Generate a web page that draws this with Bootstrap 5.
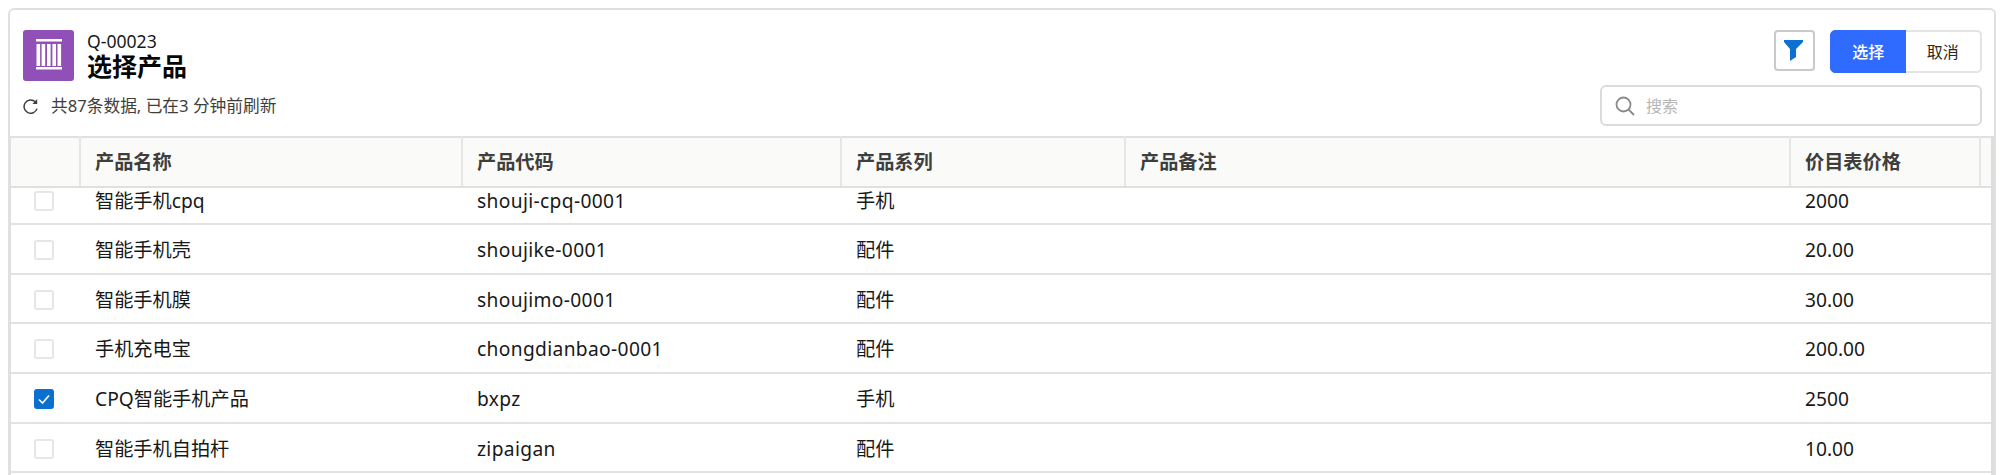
<!DOCTYPE html>
<html lang="en">
  <head>
    <meta charset="utf-8" />
    <meta name="viewport" content="width=device-width, initial-scale=1" />
    <title>选择产品</title>
    <link href="https://cdn.jsdelivr.net/npm/bootstrap@5.3.3/dist/css/bootstrap.min.css" rel="stylesheet" />
    <style>
      html, body { height: 475px; overflow: hidden; }
      body { background: #fff; font-family: "Noto Sans", "Noto Sans CJK SC", sans-serif; color: #181818; }
      .picker-page { padding: 8px 4px 0 8px; }
      .picker-card { border: 2px solid #e0e0e0; border-bottom: 0; border-radius: 6px 6px 0 0; height: 467px; overflow: hidden; background: #fff; }
      .picker-head { padding: 20px 12px 10px 13px; height: 126px; }
      .picker-icon { width: 51px; height: 51px; background: #9050b8; border-radius: 3px; flex: none; }
      .picker-names { padding-top: 1px; padding-left: 1px; }
      .picker-sub { font-size: 17.6px; line-height: 20px; color: #181818; }
      .picker-title { font-size: 25px; line-height: 30px; font-weight: 700; color: #080707; }
      .picker-info { font-size: 16.7px; color: #3e3e3c; line-height: 22px; padding-top: 1px; }
      .filter-btn { width: 41px; height: 41px; border: 2px solid #c9c9c9; border-radius: 4px; background: #fff; padding: 0 2px 0 0; }
      .pick-group { width: 152px; height: 43px; }
      .pick-group .btn { font-size: 16px; line-height: 22px; padding: 0; border-radius: 5px; }
      .btn-choose { background: #2f6bff; border: 1px solid #2f6bff; color: #fff; font-weight: 500; }
      .btn-choose:hover { background: #2f6bff; color: #fff; }
      .btn-cancel { background: #fff; border: 2px solid #e4e4e4; border-left: 0; color: #2b2826; }
      .action-row { gap: 15px; }
      .search-box { width: 382px; height: 41px; border: 2px solid #dddbda; border-radius: 6px; padding-left: 13px; gap: 11px; }
      .search-box input { border: 0; outline: 0; font-size: 16px; padding: 0; width: 320px; color: #181818; background: transparent; }
      .search-box input::placeholder { color: #b5b5b5; }
      .list-wrap { border-left: 1px solid #e0e0e0; border-right: 3px solid #dedede; height: 341px; overflow: hidden; }
      .list-table { table-layout: fixed; width: 1982px; margin: 0; border-collapse: collapse; font-size: 19.2px; }
      .list-table th, .list-table td { padding: 0 14px; vertical-align: middle; white-space: nowrap; line-height: 24px; box-shadow: none; }
      .list-table th { height: 50px; background: #fafaf9; color: #3e3e3c; font-weight: 700; border-top: 2px solid #e0e0e0; border-bottom: 2px solid #e0e0e0; border-right: 2px solid #e6e6e4; }
      .list-table th:last-child { border-right: 0; }
      .list-table td { height: 50px; color: #181818; border-bottom: 2px solid #e2e2e2; padding: 2px 14px 0 15px; }
      .list-table tr:nth-child(3n) td { height: 49px; }
      /* the list is scrolled a little: the first row shows only its lower part */
      .list-table tr:first-child td { height: 37.33px; padding: 0 14px 10px 15px; }
      .list-table .code-cell { letter-spacing: 0.35px; }
      .tick { display: block; width: 20px; height: 20px; margin-left: 8px; border: 2px solid #e6e6e6; border-radius: 3px; background: #fff; }
      .tick svg { display: block; }
      .tick-on { background: #0b6fd0; border-color: #0b6fd0; }
    </style>
  </head>
  <body>
    <div class="picker-page">
      <div class="picker-card">
        <div class="picker-head d-flex flex-column">
          <div class="d-flex justify-content-between align-items-start">
            <div class="d-flex gap-2">
              <div class="picker-icon me-1">
                <svg width="51" height="51" viewBox="0 0 51 51" fill="#fff">
                  <rect x="13" y="9" width="26" height="2.5" />
                  <rect x="13" y="37" width="26" height="2.5" />
                  <rect x="13.5" y="14" width="3.6" height="22" />
                  <rect x="18.6" y="14" width="3.6" height="22" />
                  <rect x="24" y="14" width="3.6" height="22" />
                  <rect x="29.4" y="14" width="3.6" height="22" />
                  <rect x="34.5" y="14" width="3.6" height="22" />
                </svg>
              </div>
              <div class="picker-names">
                <div class="picker-sub">Q-00023</div>
                <div class="picker-title">选择产品</div>
              </div>
            </div>
            <div class="d-flex action-row">
              <button class="filter-btn d-flex align-items-center justify-content-center" type="button" aria-label="筛选">
                <svg width="19" height="21" viewBox="0 0 19 21"><path fill="#0b70d0" d="M0 0H19V2L12 9V17L6 21V9L0 2Z" /></svg>
              </button>
              <div class="btn-group pick-group" role="group">
                <button class="btn btn-choose" type="button">选择</button>
                <button class="btn btn-cancel" type="button">取消</button>
              </div>
            </div>
          </div>
          <div class="d-flex justify-content-between align-items-center mt-1">
            <div class="picker-info d-flex align-items-center gap-2">
              <svg class="me-1" width="16" height="17" viewBox="0 0 16 17" fill="none" stroke="#3e3e3c" stroke-width="1.5">
                <path d="M14 10.6A6.6 6.6 0 1 1 12.2 3.8" />
                <path fill="#3e3e3c" stroke="none" d="M14.2 1V6H9.4Z" />
              </svg>
              <span>共87条数据, 已在3 分钟前刷新</span>
            </div>
            <div class="search-box d-flex align-items-center">
              <svg width="20" height="20" viewBox="0 0 20 20" fill="none" stroke="#8a8a8a" stroke-width="1.8">
                <circle cx="8.5" cy="8.5" r="7" />
                <path d="M13.5 13.5L19 19" />
              </svg>
              <input type="text" placeholder="搜索" />
            </div>
          </div>
        </div>

        <div class="list-wrap">
          <table class="table list-table">
            <colgroup><col style="width:69px" /><col style="width:382px" /><col style="width:379px" /><col style="width:284px" /><col style="width:665px" /><col style="width:190px" /><col style="width:13px" /></colgroup>
            <thead>
              <tr><th></th><th>产品名称</th><th>产品代码</th><th>产品系列</th><th>产品备注</th><th>价目表价格</th><th></th></tr>
            </thead>
            <tbody id="rows"></tbody>
          </table>
        </div>
      </div>
    </div>

    <script>
      let products = [
        { name: "智能手机cpq", code: "shouji-cpq-0001", family: "手机", price: "2000" },
        { name: "智能手机壳", code: "shoujike-0001", family: "配件", price: "20.00" },
        { name: "智能手机膜", code: "shoujimo-0001", family: "配件", price: "30.00" },
        { name: "手机充电宝", code: "chongdianbao-0001", family: "配件", price: "200.00" },
        { name: "CPQ智能手机产品", code: "bxpz", family: "手机", price: "2500", checked: true },
        { name: "智能手机自拍杆", code: "zipaigan", family: "配件", price: "10.00" },
      ];

      let tbl = "";
      products.forEach((val) => {
        let tick = val.checked
          ? `<span class="tick tick-on"><svg width="16" height="16" viewBox="0 0 16 16" fill="none" stroke="#fff" stroke-width="1.6"><path d="M3 8.5L6.5 12L13 4.5" /></svg></span>`
          : `<span class="tick"></span>`;
        tbl += `<tr><td>${tick}</td><td>${val.name}</td><td class="code-cell">${val.code}</td><td>${val.family}</td><td></td><td>${val.price}</td><td></td></tr>`;
      });
      document.getElementById("rows").innerHTML = tbl;
    </script>
    <script src="https://cdn.jsdelivr.net/npm/bootstrap@5.3.3/dist/js/bootstrap.bundle.min.js"></script>
  </body>
</html>
